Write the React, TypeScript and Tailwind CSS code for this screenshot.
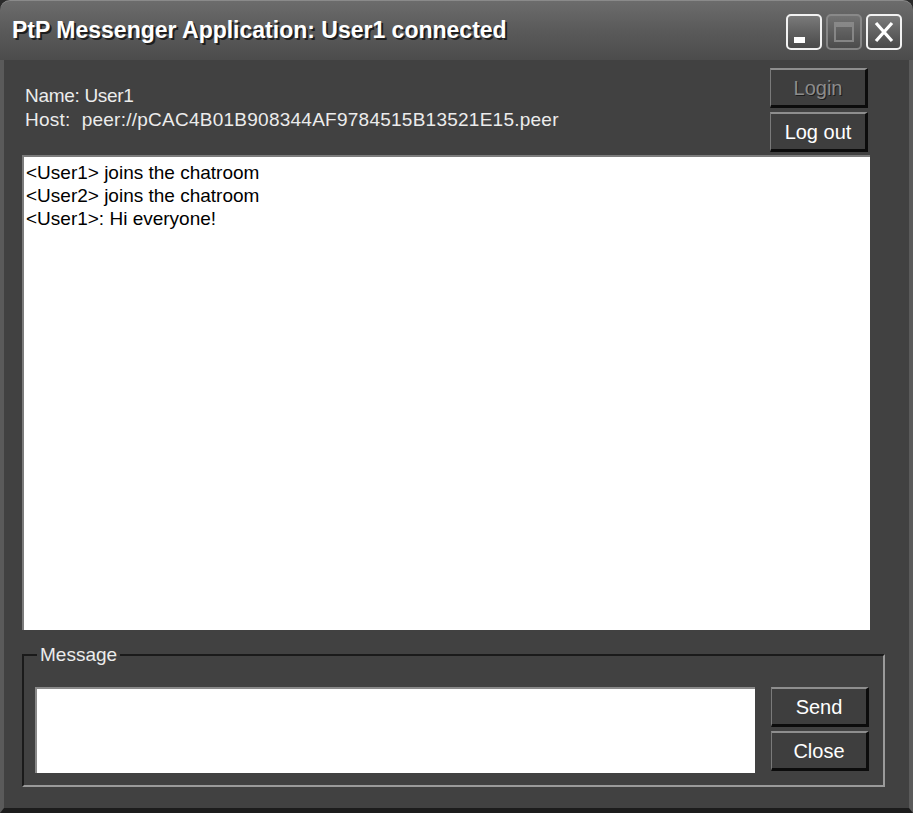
import React from "react";

const font = { fontFamily: '"Liberation Sans", Arial, sans-serif' };

function ChromeButton({
  children,
  dim = false,
}: {
  children: React.ReactNode;
  dim?: boolean;
}) {
  return (
    <div
      className={`flex h-[36px] w-[36px] items-center justify-center rounded-[5px] border-2 bg-gradient-to-b from-[#7a7a7a] to-[#4a4a4a] ${
        dim ? "border-[#9a9a9a] opacity-70" : "border-[#f2f2f2]"
      }`}
    >
      {children}
    </div>
  );
}

function WinButton({
  label,
  disabled = false,
}: {
  label: string;
  disabled?: boolean;
}) {
  return (
    <button
      type="button"
      className={`flex h-[40px] w-[98px] items-center justify-center border-t-2 border-l border-r-[3px] border-b-[3px] border-t-[#8e8e8e] border-l-[#7a7a7a] border-r-[#0c0c0c] border-b-[#0c0c0c] bg-[#3e3e3e] text-[20px] ${
        disabled
          ? "text-[#8c8c8c] [text-shadow:1px_1px_0_#1c1c1c]"
          : "text-white"
      }`}
    >
      {label}
    </button>
  );
}

export default function App() {
  return (
    <div
      style={font}
      className="flex h-[813px] w-[913px] flex-col overflow-hidden bg-[#2a2a2a]"
    >
      {/* title bar */}
      <div className="flex h-[60px] items-center justify-between rounded-t-[10px] border-t border-[#8a8a8a] bg-gradient-to-b from-[#6c6c6c] via-[#5a5a5a] to-[#4c4c4c] pl-[12px] pr-[11px]">
        <h1 className="whitespace-nowrap text-[23px] font-bold text-white [text-shadow:2px_2px_0_#1e1e1e]">
          PtP Messenger Application: User1 connected
        </h1>
        <div className="flex gap-[4px] pt-[2px]">
          <ChromeButton>
            <div className="mt-[16px] mr-[10px] h-[6px] w-[11px] bg-white" />
          </ChromeButton>
          <ChromeButton dim>
            <div className="h-[20px] w-[20px] border-2 border-t-[5px] border-[#9a9a9a]" />
          </ChromeButton>
          <ChromeButton>
            <svg width="24" height="24" viewBox="0 0 24 24">
              <path
                d="M4 3 L20 21 M20 3 L4 21"
                stroke="#ffffff"
                strokeWidth="3.2"
                fill="none"
              />
            </svg>
          </ChromeButton>
        </div>
      </div>

      {/* window body */}
      <div className="flex flex-1 flex-col border-x-[4px] border-b-[5px] border-x-[#5a5a5a] border-b-[#1c1c1c] bg-[#414141] pl-[18px]">
        <div className="flex w-[848px] items-start justify-between">
          <div className="pl-[3px] pt-[24px] text-[19px] leading-[24px] text-[#ececec]">
            <div className="tracking-[-0.3px]">Name: User1</div>
            <div className="whitespace-pre tracking-[0.25px]">
              Host:  peer://pCAC4B01B908344AF9784515B13521E15.peer
            </div>
          </div>
          <div className="mr-[2px] mt-[8px] flex flex-col gap-[4px]">
            <WinButton label="Login" disabled />
            <WinButton label="Log out" />
          </div>
        </div>

        <div className="mt-[3px] h-[475px] w-[848px] border-t-2 border-l-2 border-t-[#7c7c7c] border-l-[#7c7c7c] bg-white px-[2px] pt-[4px] text-[19px] leading-[23px] text-black">
          <div>&lt;User1&gt; joins the chatroom</div>
          <div>&lt;User2&gt; joins the chatroom</div>
          <div>&lt;User1&gt;: Hi everyone!</div>
        </div>

        <fieldset className="mt-[14px] h-[143px] w-[863px] border-2 border-t-[#1a1a1a] border-l-[#1a1a1a] border-r-[#9a9a9a] border-b-[#9a9a9a] pl-[11px] pr-[14px]">
          <legend className="ml-[2px] px-[3px] text-[19px] leading-[22px] text-[#ececec]">
            Message
          </legend>
          <div className="mt-[21px] flex items-start justify-between">
            <div className="h-[86px] w-[720px] border-t-2 border-l-2 border-t-[#8a8a8a] border-l-[#8a8a8a] bg-white" />
            <div className="flex flex-col gap-[4px]">
              <WinButton label="Send" />
              <WinButton label="Close" />
            </div>
          </div>
        </fieldset>
      </div>
    </div>
  );
}
